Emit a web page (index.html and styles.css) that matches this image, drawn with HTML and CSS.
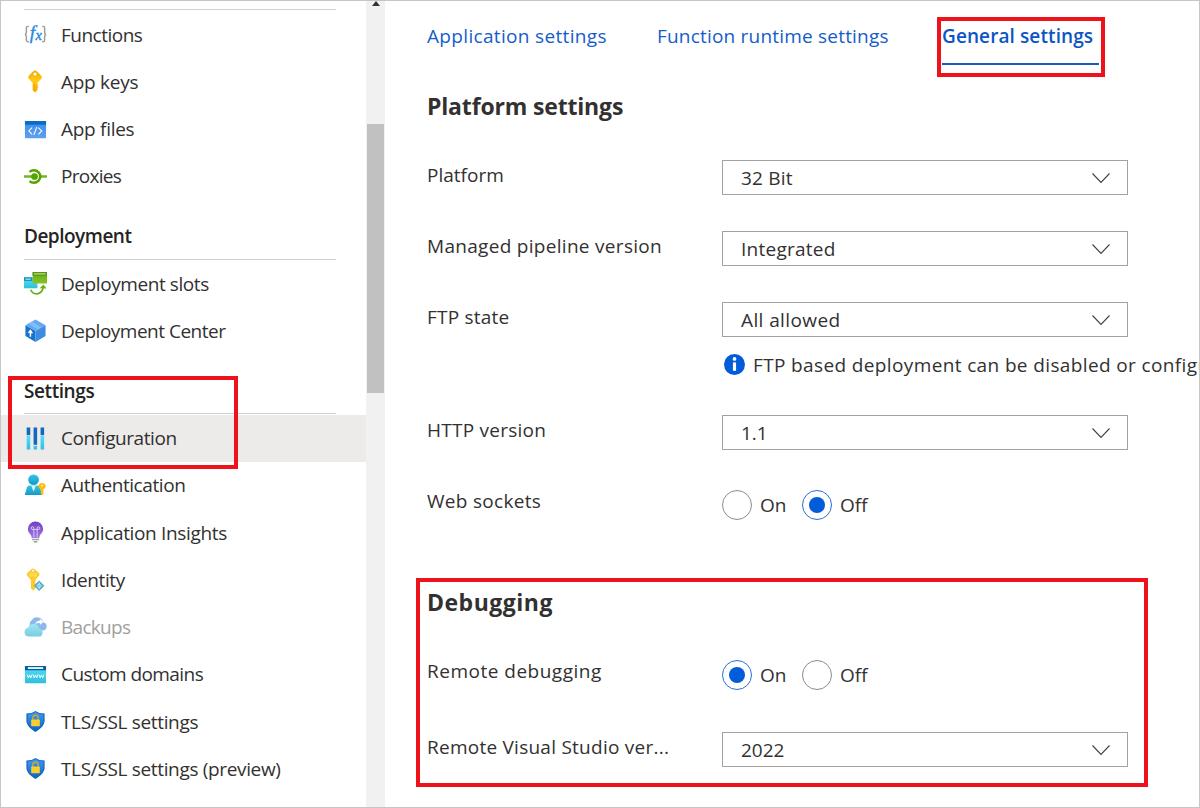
FILE: index.html
```html
<!DOCTYPE html>
<html lang="en">
<head>
<meta charset="utf-8">
<title>Configuration</title>
<link rel="stylesheet" href="styles.css">
</head>
<body>
<svg class="defs" width="0" height="0">
  <defs>
    <linearGradient id="gold" x2="0" y2="1"><stop offset="0" stop-color="#f5a300"/><stop offset=".45" stop-color="#ffcb12"/><stop offset="1" stop-color="#f5a908"/></linearGradient>
    <linearGradient id="blue" x2="0" y2="1"><stop offset="0" stop-color="#3b8ee8"/><stop offset="1" stop-color="#5ea0ef"/></linearGradient>
    <linearGradient id="cyan" x2="0" y2="1"><stop offset="0" stop-color="#50e0fa"/><stop offset="1" stop-color="#32bedd"/></linearGradient>
    <linearGradient id="teal" x2="0" y2="1"><stop offset="0" stop-color="#32c5e3"/><stop offset="1" stop-color="#1899c6"/></linearGradient>
    <linearGradient id="green" x2="0" y2="1"><stop offset="0" stop-color="#66ab16"/><stop offset="1" stop-color="#83c425"/></linearGradient>
    <linearGradient id="purple" x2="0" y2="1"><stop offset="0" stop-color="#6f3fc0"/><stop offset="1" stop-color="#a27bea"/></linearGradient>
    <linearGradient id="shield" x2="0" y2="1"><stop offset="0" stop-color="#3f99ee"/><stop offset="1" stop-color="#0d65c4"/></linearGradient>
    <linearGradient id="cloud" x2="0" y2="1"><stop offset="0" stop-color="#9fe7f2"/><stop offset="1" stop-color="#7acbe2"/></linearGradient>
    <symbol id="lock-shield" viewBox="0 0 24 24">
      <path d="M12 1C9.500 2.800 6.500 3.600 2.500 3.600V11c0 5.500 5 9 9.500 12 4.500-3 9.500-6.500 9.500-12V3.600C17.500 3.600 14.500 2.800 12 1z" fill="#0f66c5"/>
      <path d="M12 2.200C9.500 3.900 7 4.600 3.700 4.700V11c0 4.800 4.100 8 8.300 10.800 4.200-2.800 8.300-6 8.300-10.800V4.700C17 4.600 14.500 3.900 12 2.200z" fill="url(#shield)"/>
      <path d="M9.200 10.500V8.200a2.800 2.800 0 0 1 5.600 0v2.300" fill="none" stroke="#d6a52a" stroke-width="1.500"/>
      <rect x="7.500" y="10" width="9" height="7" rx=".7" fill="#f7cf2e"/>
    </symbol>
    <symbol id="chevron" viewBox="0 0 20 12"><path d="M1.500 1.500 10 10.500l8.500-9" fill="none" stroke="#404040" stroke-width="1.100"/></symbol>
  </defs>
</svg>
<div class="frame">
  <nav class="sidebar">
    <div class="rule rule-top"></div>
    <ul class="menu">
      <li class="item"><svg class="icon" viewBox="0 0 24 24"><path d="M5 3.500H4Q2.500 3.500 2.500 5v4.500Q2.500 11.700 1 12q1.500.3 1.500 2.500V18q0 1.500 1.500 1.500h1M19 3.500h1q1.500 0 1.500 1.500v4.500q0 2.200 1.500 2.500-1.500.3-1.500 2.500V18q0 1.500-1.500 1.500h-1" fill="none" stroke="#9a9a9a" stroke-width="1.500"/><text class="fx-f" x="6" y="16.500">f</text><text class="fx-x" x="12" y="18">x</text></svg><span class="t-functions">Functions</span></li>
      <li class="item"><svg class="icon" viewBox="0 0 24 24"><path d="M11.500.5q1 0 2.300 1.200l4.300 4.300q1.300 1.500 0 3L14 13.200v1.600l1 1-1 1.200 1 1.200-1 1.200v1.700l-2.500 2.500L9 21.100v-7.900L4.900 9q-1.300-1.500 0-3l4.300-4.300Q10.500.5 11.500.5z" fill="url(#gold)"/><circle cx="11.500" cy="4.200" r="1.700" fill="#fff"/><path d="M10.700 14.500v6" stroke="#e99a00" stroke-width=".8"/></svg><span class="t-keys">App keys</span></li>
      <li class="item"><svg class="icon" viewBox="0 0 24 24"><rect x="1" y="3" width="22" height="18" rx=".7" fill="url(#blue)"/><path d="M1 3.700Q1 3 1.700 3h20.500q.8 0 .8.700V7H1z" fill="#0c6bc6"/><path d="m8.500 10-3.500 3.500L8.500 17M15 10l3.500 3.500L15 17M13.300 9.500l-3 8" fill="none" stroke="#fff" stroke-width="1.100"/></svg><span class="t-files">App files</span></li>
      <li class="item"><svg class="icon" viewBox="0 0 24 24"><path d="M0 12h9M17 12h7" stroke="#6fb820" stroke-width="2.500"/><path d="M5.800 7.200a6.600 6.600 0 1 1 0 9.600" fill="none" stroke="#57a300" stroke-width="2.700"/><circle cx="11" cy="12" r="3.500" fill="#57a300"/></svg><span class="t-proxies">Proxies</span></li>
    </ul>
    <h3 class="group"><span class="t-deployment">Deployment</span></h3>
    <ul class="menu">
      <li class="item"><svg class="icon" viewBox="0 0 24 24"><rect x="0" y="5.500" width="14" height="11.500" fill="url(#cyan)"/><path d="M0 5.500h8.500v3.800H0z" fill="#188fb8"/><path d="M1.500 6.800h5.500v1.300H1.500z" fill="#a5e9f5"/><rect x="9" y="0" width="15" height="12" fill="url(#green)"/><path d="M9 0h15v4H9z" fill="#5a941b"/><path d="M10.500 1.300h12v1.400h-12z" fill="#aee06a"/><path d="M7 18.500c2.500 6 11 6 13-2" fill="none" stroke="#6bb01c" stroke-width="1.800"/><path d="m16.300 17 4-4 3.300 4.300z" fill="#6bb01c"/></svg><span class="t-slots">Deployment slots</span></li>
      <li class="item"><svg class="icon" viewBox="0 0 24 24"><path d="M1.500 6.500 12 .5l10.500 6L12 12.500z" fill="#62aaf2"/><path d="m5 4.800 3.500-2L18.500 8.800l-4 2.400z" fill="#83bdf7"/><path d="M1.500 6.500 12 12.500V24L1.500 17.800z" fill="#1a73cb"/><path d="M22.500 6.500 12 12.500V24l10.500-6.200z" fill="#3c8de2"/><path d="M6.700 18.500v-6M4.700 14.500l2-2.500 2 3" fill="none" stroke="#fff" stroke-width="1.500"/></svg><span class="t-center">Deployment Center</span></li>
    </ul>
    <h3 class="group"><span class="t-settings">Settings</span></h3>
    <ul class="menu">
      <li class="item selected"><svg class="icon" viewBox="0 0 24 24"><path d="M2.800 9.500h3.700v14H2.800zM17.300 9.500H21v14h-3.700zM10 19.500h3.700v4H10z" fill="url(#cyan)"/><path d="M2.800.5h3.700v8H2.800zM17.300.5H21v8h-3.700zM10 .5h3.700v18H10z" fill="#1169bd"/></svg><span class="t-configuration">Configuration</span></li>
      <li class="item"><svg class="icon" viewBox="0 0 24 24"><path d="M1 21 3 14q.7-2 3-2h8q2 0 2.700 2L19 22H2q-1 0-1-1z" fill="url(#teal)"/><path d="M7.500 12h5L10 18.500z" fill="#d9f5fa"/><circle cx="10" cy="6" r="5.600" fill="url(#teal)"/><path d="M18.800 9.500c2 0 3.900 1.400 3.900 3.400 0 1.700-1.200 2.500-2.500 3v4.900l-1.400 1.200-1.300-1.200v-4.900c-1.300-.5-2.600-1.300-2.600-3 0-2 1.900-3.400 3.900-3.400z" fill="#fdbc0b"/><circle cx="18.800" cy="12.200" r="1.100" fill="#fff0bc"/></svg><span class="t-authentication">Authentication</span></li>
      <li class="item"><svg class="icon" viewBox="0 0 24 24"><path d="M12 .5a8 8 0 0 1 8 8c0 4.200-4 5-4 9.300H8c0-4.300-4-5.100-4-9.300a8 8 0 0 1 8-8z" fill="url(#purple)"/><path d="M10.300 17V8.800M13.700 17V8.800M8.300 8.800h7.400M10.300 8.800V7.400a1.400 1.400 0 1 0-1.500 1.400M13.700 8.800V7.400a1.400 1.400 0 1 1 1.500 1.400" fill="none" stroke="#dcc8fb" stroke-width="1"/><path d="M8.300 18.400h7.400v1.800H8.300zM9.500 20.800h5L13 22.600h-2z" fill="#a3a3a3"/></svg><span class="t-insights">Application Insights</span></li>
      <li class="item"><svg class="icon" viewBox="0 0 24 24"><path d="M9.500.5q1 0 2.200 1.200l3.900 3.500q1.300 1.400 0 3L12 12.500v9l-2.300 2-2.500-2v-9L3.400 8.200q-1.300-1.600 0-3l3.900-3.500Q8.500.5 9.500.5z" fill="#fccb2d"/><circle cx="9.500" cy="2.800" r="1.100" fill="#fff"/><path d="M5.500 6.200h8M5.500 8.200h8" stroke="#ffe680" stroke-width="1"/><path d="m15.800 13.500 5 5-5 5-5-5z" fill="#51b1cf" stroke="#4d9cbd" stroke-width=".8"/><path d="M15.800 15v7M13.300 18.500l2.500-2 2.500 2-2.500 2z" fill="none" stroke="#cdf2fb" stroke-width=".9"/></svg><span class="t-identity">Identity</span></li>
      <li class="item disabled"><svg class="icon" viewBox="0 0 24 24"><path d="M11.500 15H20a4.200 4.200 0 0 0 .2-8.300A6.600 6.600 0 0 0 8 4.800C6 5.500 6 7.500 6 10z" fill="#8db8ec"/><path d="M11.500 8.700Q12.500 5 16.500 5V2.800L20.300 6l-3.800 3.300V7.200q-3.300-.2-5 1.500z" fill="#fff"/><path d="M4.500 21.500h11a4 4 0 0 0 .8-7.900 6.400 6.400 0 0 0-12.200-1.300 4.700 4.700 0 0 0 .4 9.200z" fill="url(#cloud)"/></svg><span class="t-backups">Backups</span></li>
      <li class="item"><svg class="icon" viewBox="0 0 24 24"><rect x="1" y="3" width="22" height="18" rx=".7" fill="url(#cyan)"/><path d="M1 3.700Q1 3 1.700 3h20.500q.8 0 .8.700V7.500H1z" fill="#075d9c"/><path d="M4 4.300h16v1.900H4z" fill="#eefcff"/><path d="m3.200 12 1.300 3.500 1.300-3 1.300 3 1.300-3.500m1.100 0 1.200 3.500 1.300-3 1.300 3 1.200-3.500m1.100 0 1.300 3.500 1.300-3 1.300 3 1.300-3.500" fill="none" stroke="#fff" stroke-width="1"/></svg><span class="t-domains">Custom domains</span></li>
      <li class="item"><svg class="icon"><use href="#lock-shield"/></svg><span class="t-tls">TLS/SSL settings</span></li>
      <li class="item"><svg class="icon"><use href="#lock-shield"/></svg><span class="t-tlspre">TLS/SSL settings (preview)</span></li>
      <li class="item"><svg class="icon" viewBox="0 0 24 24"><path d="M5.500 2h4v3h-4zM13.500 2h4v3h-4z" fill="#a7effb"/></svg></li>
    </ul>
  </nav>
  <div class="scrollbar"><svg class="arrow" viewBox="0 0 8 5"><path d="M4 0 8 5H0z" fill="#333"/></svg><div class="thumb"></div></div>
  <main class="content">
    <div class="tabs">
      <a class="tab t-appset">Application settings</a>
      <a class="tab t-runtime">Function runtime settings</a>
      <a class="tab active"><span class="t-general">General settings</span></a>
    </div>
    <h2 class="title title-platform"><span class="t-platset">Platform settings</span></h2>
    <section class="form">
      <label class="label t-platform">Platform</label>
      <div class="select"><span class="t-bit">32 Bit</span><svg class="chevron"><use href="#chevron"/></svg></div>
      <label class="label t-managed">Managed pipeline version</label>
      <div class="select"><span class="t-integrated">Integrated</span><svg class="chevron"><use href="#chevron"/></svg></div>
      <label class="label t-ftp">FTP state</label>
      <div class="stack">
        <div class="select"><span class="t-allowed">All allowed</span><svg class="chevron"><use href="#chevron"/></svg></div>
        <div class="note"><svg class="info" viewBox="0 0 20 20"><circle cx="10" cy="10" r="10" fill="#015cda"/><circle cx="10" cy="4.700" r="1.800" fill="#fff"/><path d="M8.500 8h3v8h-3z" fill="#fff"/></svg><span class="t-note">FTP based deployment can be disabled or configu</span></div>
      </div>
      <label class="label t-http">HTTP version</label>
      <div class="select"><span>1.1</span><svg class="chevron"><use href="#chevron"/></svg></div>
      <label class="label t-web">Web sockets</label>
      <div class="radios"><span class="radio"></span><span class="option">On</span><span class="radio checked"></span><span class="option">Off</span></div>
    </section>
    <h2 class="title title-debug"><span class="t-debugging">Debugging</span></h2>
    <section class="form form-debug">
      <label class="label t-remote">Remote debugging</label>
      <div class="radios"><span class="radio checked"></span><span class="option">On</span><span class="radio"></span><span class="option">Off</span></div>
      <label class="label t-visual">Remote Visual Studio ver...</label>
      <div class="select"><span class="t-year">2022</span><svg class="chevron"><use href="#chevron"/></svg></div>
    </section>
  </main>
  <div class="mark mark-settings"></div>
  <div class="mark mark-tab"></div>
  <div class="mark mark-debug"></div>
</div>
</body>
</html>
```
FILE: styles.css
```css
* { box-sizing: border-box; }
body { margin: 0; background: #fff; color: #323130; font: 19px/30px "Open Sans", "Noto Sans", sans-serif; }
.defs { position: absolute; }
.frame { position: relative; display: flex; width: 1200px; height: 808px; border: 1px solid #c6c6c6; overflow: hidden; white-space: nowrap; }
.sidebar { width: 365px; height: 806px; overflow: hidden; flex: none; letter-spacing: -.42px; }
.rule { height: 1px; width: 312px; margin-left: 23px; background: #d2d2d2; }
.rule-top { margin: 8px 0 1px 23px; }
.menu { list-style: none; margin: 0; padding: 0; }
.item { display: flex; align-items: center; height: 47.250px; padding-left: 23px; gap: 14px; }
.item.selected { background: #edebe9; }
.item.disabled { color: #a19f9d; }
.icon { width: 23px; height: 23px; flex: none; }
.fx-f { font: italic 20px "Liberation Serif", serif; fill: #2388e3; stroke: #2388e3; stroke-width: .4; }
.fx-x { font: italic 15px "Liberation Serif", serif; fill: #2388e3; stroke: #2388e3; stroke-width: .4; }
.group { margin: 0 0 .5px 23px; width: 312px; height: 59.500px; padding-top: 21px; border-bottom: 1px solid #cfcfcf; font-size: 19px; font-weight: 600; color: #252423; line-height: 30px; }
.scrollbar { width: 19px; flex: none; background: #f1f1f1; }
.arrow { display: block; width: 8px; height: 5px; margin: 0 0 0 6px; }
.thumb { width: 17px; height: 269px; margin: 118px 0 0 1px; background: #c1c1c1; }
.content { flex: 1; min-width: 0; padding-left: 42px; overflow: hidden; }
.tabs { display: flex; height: 64px; padding-top: 20px; color: #155cc9; }
.tab { height: 44px; flex: none; }
.tab:nth-child(1) { width: 230px; }
.tab:nth-child(2) { width: 285px; }
.tab.active { width: 157px; border-bottom: 2px solid #1759bd; font-weight: 600; color: #0b55c4; }
.title { margin: 0; font-size: 23px; font-weight: 700; line-height: 30px; }
.title-platform { padding-top: 26px; height: 94.500px; }
.form { display: grid; grid-template-columns: 295px 406px; row-gap: 36px; align-items: start; }
.select { display: flex; align-items: center; justify-content: space-between; height: 35px; padding: 1px 16px 0 18px; border: 1px solid #a3a2a1; }
.chevron { width: 20px; height: 12px; }
.stack { height: 77px; }
.note { display: flex; align-items: center; gap: 8px; margin: 13px 0 0 2px; }
.info { width: 21px; height: 21px; flex: none; }
.radios { display: flex; align-items: center; height: 35px; padding-top: 3px; }
.radio { display: grid; place-items: center; width: 30px; height: 30px; border: 1px solid #8d8c8b; border-radius: 50%; }
.radio.checked { border-color: #2a6fd6; }
.radio.checked::after { content: ""; width: 16px; height: 16px; border-radius: 50%; background: #015cda; }
.option { width: 50px; padding-left: 8px; }
.title-debug { padding-top: 66px; height: 135px; }
.form-debug { row-gap: 41px; }
.mark { position: absolute; border: 4px solid #ee121b; }
.mark-settings { left: 7px; top: 375px; width: 230px; height: 93px; }
.mark-tab { left: 936px; top: 16px; width: 168px; height: 60px; }
.mark-debug { left: 415px; top: 577px; width: 732px; height: 209px; }

/* Label tracking */
.t-keys, .t-files { letter-spacing: -.28px; }
.t-proxies, .t-backups { letter-spacing: -.7px; }
.t-center, .t-functions, .t-deployment { letter-spacing: -.5px; }
.t-insights, .t-tls, .t-tlspre { letter-spacing: -.34px; }
.t-domains { letter-spacing: -.57px; }
.t-appset { letter-spacing: .33px; }
.t-runtime, .t-ftp, .t-bit { letter-spacing: .2px; }
.t-general { letter-spacing: .1px; }
.t-platset { letter-spacing: -.17px; }
.t-debugging, .t-remote { letter-spacing: .5px; }
.t-managed, .t-web { letter-spacing: .3px; }
.t-http, .t-integrated, .t-visual { letter-spacing: .25px; }
.t-allowed { letter-spacing: .4px; }
.t-note { letter-spacing: .37px; }
```
